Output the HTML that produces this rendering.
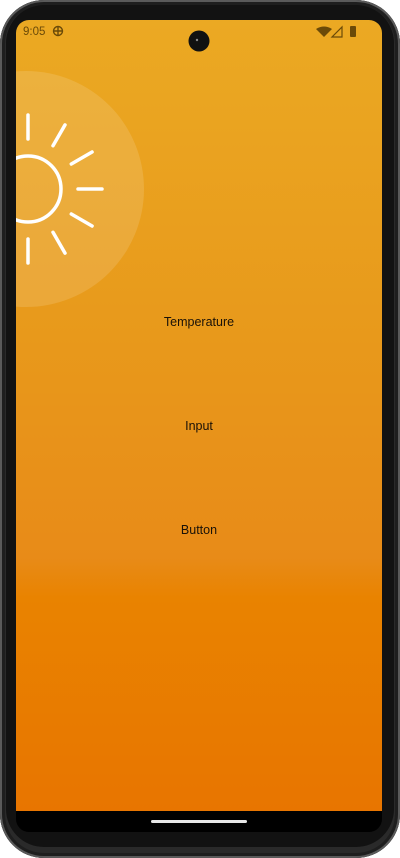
<!DOCTYPE html>
<html><head><meta charset="utf-8"><style>
html,body{margin:0;padding:0;background:#fff;}
body{width:400px;height:858px;position:relative;overflow:hidden;font-family:"Liberation Sans",sans-serif;}
.body{position:absolute;left:0;top:0;width:400px;height:858px;border-radius:44px;background:#2a2a2a;box-shadow:inset 0 0 0 2px #5a5a5a,inset 0 0 0 5px #1e1e1e;}
.bezel{position:absolute;left:6px;top:5px;width:388px;height:842px;border-radius:38px;background:#121212;}
.screen{position:absolute;left:16px;top:20px;width:366px;height:812px;border-radius:13px;overflow:hidden;background:#000;}
.app{position:absolute;left:0;top:0;width:366px;height:791px;background:linear-gradient(180deg,#eba923 0%,#e8991b 40%,#e88b18 68%,#e98300 73%,#e87500 100%);overflow:hidden;}
.lbl{position:absolute;left:0;width:366px;text-align:center;font-size:12.5px;color:#1a1208;}
.pill{position:absolute;left:135px;top:800px;width:96px;height:3px;border-radius:2px;background:#e8e8e8;}
</style></head><body>
<div class="body"></div>
<div class="bezel"></div>
<div class="screen">
 <div class="app">
  <svg width="366" height="791" style="position:absolute;left:0;top:0">
   <circle cx="10" cy="169" r="118" fill="rgba(255,255,255,0.13)"/>
   <g stroke="#fff" stroke-width="3.5" fill="none" stroke-linecap="round">
    <circle cx="12" cy="169" r="33"/>
    <g transform="translate(12,169)">
     <line x1="0" y1="-50" x2="0" y2="-74"/>
     <line x1="0" y1="-50" x2="0" y2="-74" transform="rotate(30)"/>
     <line x1="0" y1="-50" x2="0" y2="-74" transform="rotate(60)"/>
     <line x1="0" y1="-50" x2="0" y2="-74" transform="rotate(90)"/>
     <line x1="0" y1="-50" x2="0" y2="-74" transform="rotate(120)"/>
     <line x1="0" y1="-50" x2="0" y2="-74" transform="rotate(150)"/>
     <line x1="0" y1="-50" x2="0" y2="-74" transform="rotate(180)"/>
    </g>
   </g>
   <text x="7" y="15" font-family="Liberation Sans" font-size="11.5" fill="#6b4a08">9:05</text>
   <g transform="translate(42,11)" stroke="#6b4a08" fill="none" stroke-width="1.4">
    <circle r="4.5"/><line x1="-5" y1="0" x2="5" y2="0"/><line x1="0" y1="-5" x2="0" y2="5"/>
   </g>
   <path d="M300 9 Q308 4 316 9 L308 17 Z" fill="#6b4a08"/>
   <path d="M326 7 L326 17 L316 17 Z" fill="none" stroke="#6b4a08" stroke-width="1.2"/>
   <rect x="334" y="6" width="6" height="11" rx="1" fill="#6b4a08"/>
   <circle cx="183" cy="21" r="10.5" fill="#111"/>
   <circle cx="181" cy="20" r="1.2" fill="#888"/>
  </svg>
  <div class="lbl" style="top:295px">Temperature</div>
  <div class="lbl" style="top:399px">Input</div>
  <div class="lbl" style="top:503px">Button</div>
 </div>
 <div class="pill"></div>
</div>
</body></html>
